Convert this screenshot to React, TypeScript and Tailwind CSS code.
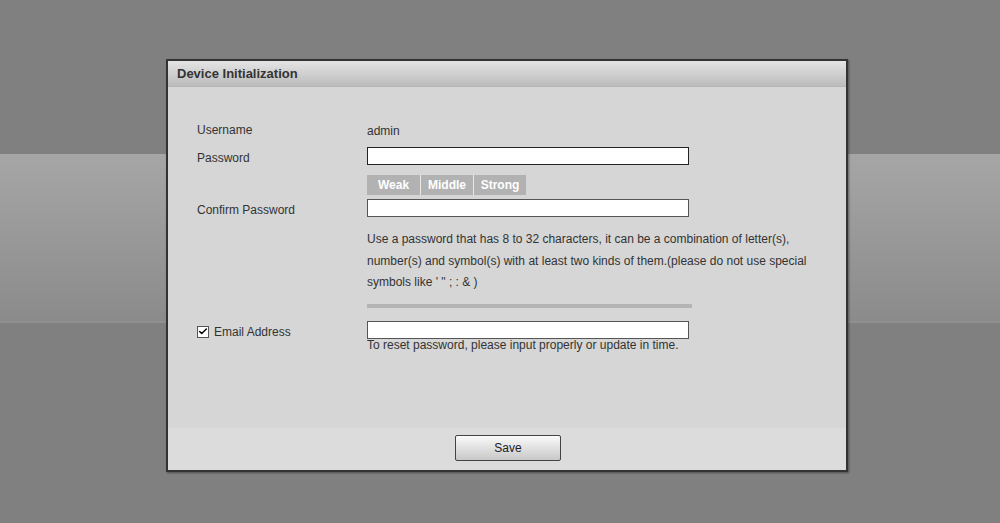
import { Check } from "lucide-react";

const font = { fontFamily: '"Liberation Sans", Arial, sans-serif' };

function Field({ label, children, low = false }: { label: React.ReactNode; children: React.ReactNode; low?: boolean }) {
  return (
    <div className="flex items-center">
      <div className={`w-[170px] shrink-0 text-[12px] text-[#333] ${low ? "relative top-[2px]" : ""}`}>{label}</div>
      <div>{children}</div>
    </div>
  );
}

function TextInput() {
  return <div className="w-[322px] h-[18px] bg-white border border-[#222]" />;
}

export default function App() {
  return (
    <div className="relative w-[1000px] h-[523px] overflow-hidden" style={font}>
      <div className="flex flex-col h-full">
        <div className="h-[154px] bg-[#808080]" />
        <div className="h-[167px] bg-gradient-to-b from-[#a6a6a6] to-[#8b8b8b]" />
        <div className="h-[2px] bg-[#8f8f8f]" />
        <div className="flex-1 bg-[#808080]" />
      </div>

      <div className="absolute left-[166px] top-[59px] w-[682px] h-[413px] border-2 border-[#333] bg-[#d6d6d6] flex flex-col shadow-[1px_1px_2px_rgba(0,0,0,0.4)]">
        <div className="h-[26px] bg-gradient-to-b from-[#e4e4e4] to-[#bcbcbc] flex items-center px-[9px] border-b border-[#b5b5b5]">
          <span className="text-[13px] font-bold text-[#333]">Device Initialization</span>
        </div>

        <div className="flex-1 pl-[29px] pt-[31px] flex flex-col">
          <Field label="Username">
            <span className="text-[12px] text-[#333] leading-[18px]">admin</span>
          </Field>
          <div className="mt-[5px]">
            <Field label="Password" low>
              <TextInput />
            </Field>
          </div>
          <div className="mt-[10px] ml-[170px] flex h-[20px]">
            {["Weak", "Middle", "Strong"].map((s, i) => (
              <div
                key={s}
                className={`w-[53px] flex items-center justify-center bg-[#b2b2b2] text-white text-[12px] font-bold ${i > 0 ? "border-l border-[#e8e8e8]" : ""}`}
              >
                {s}
              </div>
            ))}
          </div>
          <div className="mt-[4px]">
            <Field label="Confirm Password" low>
              <div className="w-[322px] h-[18px] bg-white border border-[#555]" />
            </Field>
          </div>
          <p className="mt-[12px] ml-[170px] w-[450px] text-[12px] leading-[21.5px] text-[#333]">
            Use a password that has 8 to 32 characters, it can be a combination of letter(s), number(s) and symbol(s) with at least two kinds of them.(please do not use special symbols like ' " ; : &amp; )
          </p>
          <div className="mt-[10px] ml-[170px] w-[325px] h-[4px] bg-[#b4b4b4]" />
          <div className="mt-[13px]">
            <Field
              low
              label={
                <span className="flex items-center gap-[5px]">
                  <span className="w-[12px] h-[12px] bg-white border border-[#555] flex items-center justify-center">
                    <Check size={11} strokeWidth={3.5} className="text-black" />
                  </span>
                  Email Address
                </span>
              }
            >
              <div className="w-[322px] h-[18px] bg-white border border-[#555]" />
            </Field>
          </div>
          <div className="ml-[170px] text-[12px] leading-[13px] text-[#333]">
            To reset password, please input properly or update in time.
          </div>
        </div>

        <div className="h-[42px] bg-[#dcdcdc] flex items-start justify-center pt-[7px] pl-[2px]">
          <button className="w-[106px] h-[26px] border border-[#444] rounded-[2px] bg-gradient-to-b from-[#fafafa] to-[#c8c8c8] text-[12px] text-[#222]">
            Save
          </button>
        </div>
      </div>
    </div>
  );
}
